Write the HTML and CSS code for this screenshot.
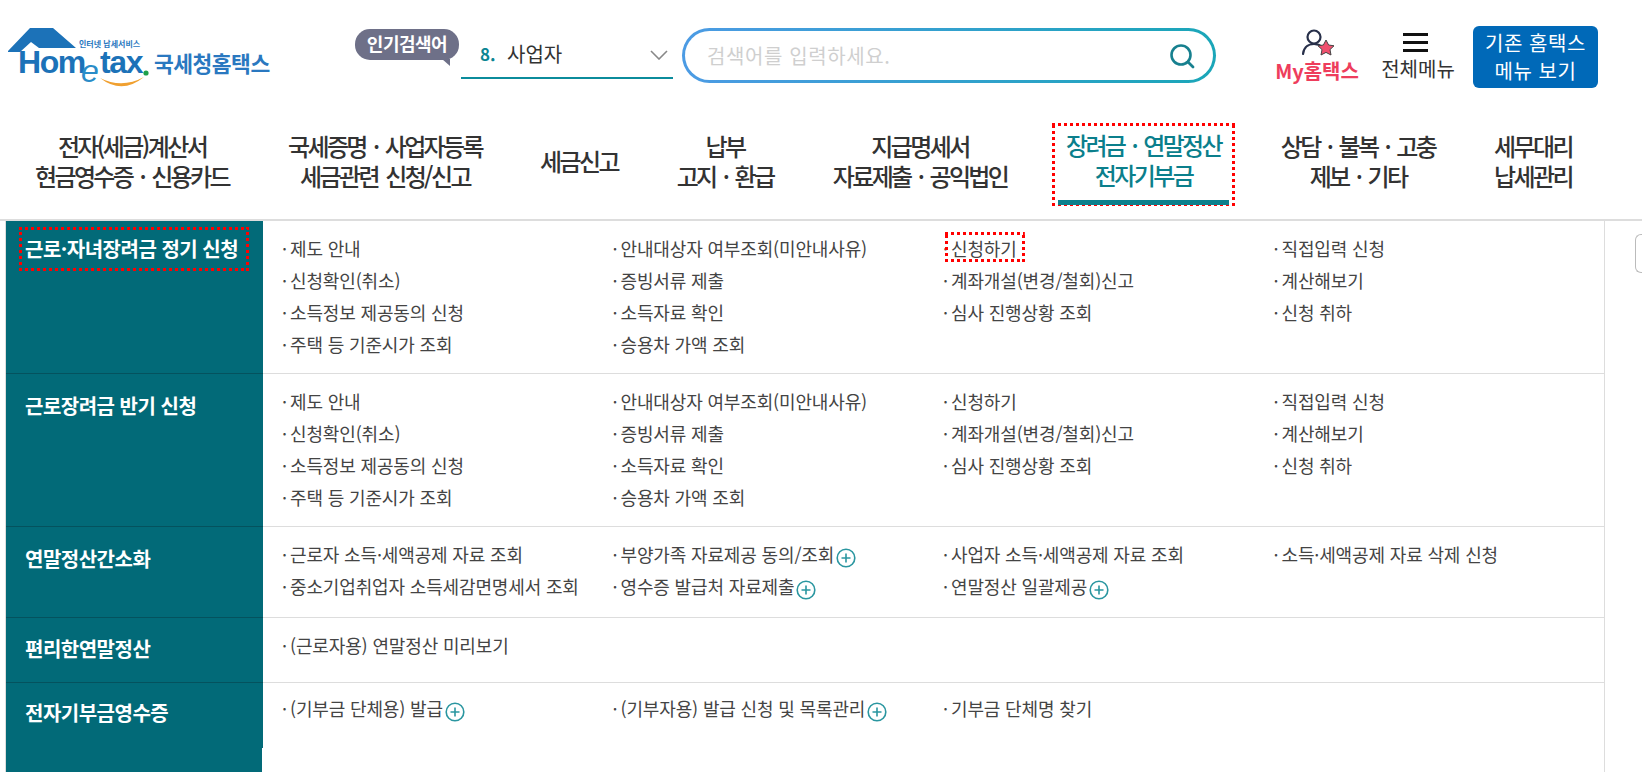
FILE: index.html
```html
<!DOCTYPE html>
<html lang="ko">
<head>
    <meta charset="UTF-8">
    <meta name="viewport" content="width=device-width, initial-scale=1.0">
    <title>Hometax</title>
    <link rel="stylesheet" href="styles.css">
</head>
<body>
    <header class="top-bar">
        <a class="logo" href="#">
            <svg width="280" height="70" viewBox="0 0 280 70">
                <path d="M8 26 L30 3 H53 L76 23 H39 L31 17 L20 27 H8 Z" fill="#1c72b8"/>
                <text class="logo-small" x="79" y="22">인터넷 납세서비스</text>
                <text class="logo-home" x="18" y="48">Hom</text>
                <text class="logo-e" x="81" y="57">e</text>
                <text class="logo-home" x="100" y="48">tax</text>
                <circle cx="146" cy="48" r="2.6" fill="#1fa04a"/>
                <path d="M100 53 Q122 70 144 52 Q122 64 100 53 Z" fill="#f0a030"/>
                <text class="logo-name" x="154" y="47">국세청홈택스</text>
            </svg>
        </a>
        <div class="popular">
            <span class="popular-badge">인기검색어</span>
        </div>
        <div class="keyword-select">
            <b>8.</b>
            <span>사업자</span>
            <svg class="chevron" width="18" height="10" viewBox="0 0 18 10"><path d="M1 1 L9 9 L17 1" fill="none" stroke="#888" stroke-width="1.6"/></svg>
        </div>
        <div class="search-box">
            <div class="search-inner">
                <span class="placeholder">검색어를 입력하세요.</span>
                <svg width="28" height="28" viewBox="0 0 28 28"><circle cx="13" cy="13" r="9.5" fill="none" stroke="#17808f" stroke-width="2.6"/><path d="M20 20 L25 25" stroke="#17808f" stroke-width="2.8" stroke-linecap="round"/></svg>
            </div>
        </div>
        <a class="my-tax" href="#">
            <svg width="34" height="28" viewBox="0 0 34 28">
                <circle cx="12" cy="8" r="6.5" fill="none" stroke="#28304a" stroke-width="2.2"/>
                <path d="M1 25 C2 17 8 15 12 15 C15 15 18 16 20 18" fill="none" stroke="#28304a" stroke-width="2.2" stroke-linecap="round"/>
                <path d="M24 11 L26.6 16 L32 16.8 L28 20.6 L29 26 L24 23.4 L19 26 L20 20.6 L16 16.8 L21.4 16 Z" fill="#f0506e" stroke="#444" stroke-width="1"/>
            </svg>
            <span>My홈택스</span>
        </a>
        <a class="all-menu" href="#">
            <span class="burger"><i></i><i></i><i></i></span>
            <span>전체메뉴</span>
        </a>
        <a class="old-menu" href="#">기존 홈택스<br>메뉴 보기</a>
    </header>

    <nav class="gnb">
        <a href="#">전자(세금)계산서<br>현금영수증 · 신용카드</a>
        <a href="#">국세증명 · 사업자등록<br>세금관련 신청/신고</a>
        <a href="#">세금신고</a>
        <a href="#">납부<br>고지 · 환급</a>
        <a href="#">지급명세서<br>자료제출 · 공익법인</a>
        <a href="#" class="active"><span class="active-inner red-dots">장려금 · 연말정산<br>전자기부금</span></a>
        <a href="#">상담 · 불복 · 고충<br>제보 · 기타</a>
        <a href="#">세무대리<br>납세관리</a>
    </nav>

    <main class="menu-table">
        <section class="menu-row row-1">
            <h2><span class="marked-title red-dots">근로·자녀장려금 정기 신청</span></h2>
            <ul>
                <li>제도 안내</li>
                <li>안내대상자 여부조회(미안내사유)</li>
                <li><span class="marked red-dots">신청하기</span></li>
                <li>직접입력 신청</li>
                <li>신청확인(취소)</li>
                <li>증빙서류 제출</li>
                <li>계좌개설(변경/철회)신고</li>
                <li>계산해보기</li>
                <li>소득정보 제공동의 신청</li>
                <li>소득자료 확인</li>
                <li>심사 진행상황 조회</li>
                <li>신청 취하</li>
                <li>주택 등 기준시가 조회</li>
                <li>승용차 가액 조회</li>
            </ul>
        </section>
        <section class="menu-row row-2">
            <h2>근로장려금 반기 신청</h2>
            <ul>
                <li>제도 안내</li>
                <li>안내대상자 여부조회(미안내사유)</li>
                <li>신청하기</li>
                <li>직접입력 신청</li>
                <li>신청확인(취소)</li>
                <li>증빙서류 제출</li>
                <li>계좌개설(변경/철회)신고</li>
                <li>계산해보기</li>
                <li>소득정보 제공동의 신청</li>
                <li>소득자료 확인</li>
                <li>심사 진행상황 조회</li>
                <li>신청 취하</li>
                <li>주택 등 기준시가 조회</li>
                <li>승용차 가액 조회</li>
            </ul>
        </section>
        <section class="menu-row row-3">
            <h2>연말정산간소화</h2>
            <ul>
                <li>근로자 소득·세액공제 자료 조회</li>
                <li>부양가족 자료제공 동의/조회<svg class="plus" viewBox="0 0 20 20"><circle cx="10" cy="10" r="8.8"/><path d="M10 5.5 V14.5 M5.5 10 H14.5"/></svg></li>
                <li>사업자 소득·세액공제 자료 조회</li>
                <li>소득·세액공제 자료 삭제 신청</li>
                <li>중소기업취업자 소득세감면명세서 조회</li>
                <li>영수증 발급처 자료제출<svg class="plus" viewBox="0 0 20 20"><circle cx="10" cy="10" r="8.8"/><path d="M10 5.5 V14.5 M5.5 10 H14.5"/></svg></li>
                <li>연말정산 일괄제공<svg class="plus" viewBox="0 0 20 20"><circle cx="10" cy="10" r="8.8"/><path d="M10 5.5 V14.5 M5.5 10 H14.5"/></svg></li>
            </ul>
        </section>
        <section class="menu-row row-4">
            <h2>편리한연말정산</h2>
            <ul>
                <li>(근로자용) 연말정산 미리보기</li>
            </ul>
        </section>
        <section class="menu-row row-5">
            <h2>전자기부금영수증</h2>
            <ul>
                <li>(기부금 단체용) 발급<svg class="plus" viewBox="0 0 20 20"><circle cx="10" cy="10" r="8.8"/><path d="M10 5.5 V14.5 M5.5 10 H14.5"/></svg></li>
                <li>(기부자용) 발급 신청 및 목록관리<svg class="plus" viewBox="0 0 20 20"><circle cx="10" cy="10" r="8.8"/><path d="M10 5.5 V14.5 M5.5 10 H14.5"/></svg></li>
                <li>기부금 단체명 찾기</li>
            </ul>
        </section>
        <div class="side-fill"></div>
        <span class="side-tab"></span>
    </main>
</body>
</html>
```

FILE: styles.css
```css
* {
    box-sizing: border-box;
}

html, body {
    height: 772px;
    overflow: hidden;
}

body {
    margin: 0;
    font-family: "Noto Sans CJK KR", "Noto Sans", sans-serif;
    color: #333;
    background-color: #fff;
}

a {
    color: inherit;
    text-decoration: none;
}

/* square red dots around the highlighted items */
.red-dots {
    background:
        repeating-linear-gradient(90deg, #f00 0 3px, transparent 3px 6px) top / 100% 3px no-repeat,
        repeating-linear-gradient(90deg, #f00 0 3px, transparent 3px 6px) bottom / 100% 3px no-repeat,
        repeating-linear-gradient(0deg, #f00 0 3px, transparent 3px 6px) left / 3px 100% no-repeat,
        repeating-linear-gradient(0deg, #f00 0 3px, transparent 3px 6px) right / 3px 100% no-repeat;
}

/* top bar */
.top-bar {
    display: flex;
    align-items: flex-start;
    height: 118px;
}

.logo {
    width: 355px;
    height: 70px;
    margin-top: 25px;
}

.logo svg {
    display: block;
}

.logo-small {
    font-size: 8px;
    font-weight: 700;
    fill: #2a78c0;
}

.logo-home {
    font-family: "Liberation Sans", sans-serif;
    font-size: 32px;
    font-weight: 700;
    letter-spacing: -1.4px;
    fill: #1c72b8;
}

.logo-e {
    font-family: "Liberation Sans", sans-serif;
    font-size: 32px;
    font-style: italic;
    fill: #2a8cc8;
}

.logo-name {
    font-size: 21.5px;
    font-weight: 700;
    letter-spacing: -0.5px;
    fill: #2a78c0;
}

.popular {
    width: 106px;
    margin-top: 29px;
}

.popular-badge {
    position: relative;
    display: block;
    width: 104px;
    height: 31px;
    line-height: 28px;
    text-align: center;
    font-size: 18px;
    font-weight: 700;
    letter-spacing: -0.5px;
    color: #fff;
    background-color: #6e7088;
    border-radius: 15px;
}

.popular-badge::after {
    content: "";
    position: absolute;
    right: 9px;
    bottom: -6px;
    border-top: 7px solid #6e7088;
    border-left: 8px solid transparent;
}

.keyword-select {
    display: flex;
    align-items: center;
    width: 212px;
    height: 50px;
    margin-top: 29px;
    padding-left: 19px;
    border-bottom: 2px solid #0b8c9c;
    font-size: 20px;
}

.keyword-select b {
    width: 27px;
    color: #0b8593;
    font-size: 17px;
}

.keyword-select span {
    flex: 1;
    color: #333;
}

.keyword-select .chevron {
    margin-right: 5px;
    margin-top: 4px;
}

.search-box {
    width: 534px;
    height: 55px;
    margin: 28px 0 0 9px;
    padding: 3px;
    border-radius: 28px;
    background: linear-gradient(90deg, #4c9be4, #1aa6b8);
}

.search-inner {
    display: flex;
    align-items: center;
    justify-content: space-between;
    height: 49px;
    padding: 0 17px 0 22px;
    border-radius: 25px;
    background-color: #fff;
}

.placeholder {
    font-size: 20px;
    letter-spacing: 0.6px;
    color: #cfcfcf;
}

.my-tax {
    display: flex;
    flex-direction: column;
    align-items: center;
    width: 84px;
    margin: 29px 0 0 59px;
    color: #ee3d5c;
    font-size: 20px;
    font-weight: 700;
    line-height: 28px;
    white-space: nowrap;
}

.my-tax svg {
    display: block;
    margin-left: 4px;
}

.all-menu {
    display: flex;
    flex-direction: column;
    align-items: center;
    width: 76px;
    margin: 33px 0 0 21px;
    font-size: 20px;
    line-height: 28px;
    white-space: nowrap;
}

.burger {
    display: flex;
    flex-direction: column;
    gap: 5px;
    width: 25px;
    height: 22px;
    margin-right: 5px;
}

.burger i {
    display: block;
    height: 3px;
    background-color: #111;
}

.old-menu {
    width: 125px;
    height: 62px;
    margin: 26px 0 0 17px;
    padding-top: 3px;
    text-align: center;
    font-size: 20px;
    line-height: 28px;
    letter-spacing: 0.6px;
    color: #fff;
    background-color: #0069b8;
    border-radius: 6px;
}

/* main navigation */
.gnb {
    display: grid;
    grid-template-columns: 264px 242px 146px 146px 244px 200px 232px 118px;
    height: 103px;
    padding-bottom: 8px;
    align-items: center;
    border-bottom: 2px solid #ddd;
}

.gnb a {
    display: block;
    margin-bottom: 7px;
    text-align: center;
    font-size: 24px;
    font-weight: 500;
    line-height: 30px;
    letter-spacing: -2.6px;
    word-spacing: 3px;
    color: #333;
}

.gnb .active {
    margin-bottom: 0;
    color: #0b7f8c;
}

.active-inner {
    display: block;
    width: 183px;
    height: 83px;
    margin: 0 auto 0 10px;
    padding: 7px 3px 0;
}

.active-inner::after {
    content: "";
    display: block;
    height: 5px;
    margin: 10px 3px 0;
    background-color: #0b7f8c;
}

/* menu table */
.menu-table {
    position: relative;
    width: 1600px;
    margin-left: 5px;
    border-left: 1px solid #ddd;
    border-right: 1px solid #ddd;
}

.menu-row {
    display: grid;
    grid-template-columns: 257px 1fr;
    border-bottom: 1px solid #ddd;
}

.row-1 { height: 153px; }
.row-2 { height: 153px; }
.row-3 { height: 91px; }
.row-4 { height: 65px; }
.row-5 { height: 64px; border-bottom: 0; }

.menu-row h2 {
    margin: 0 0 -1px;
    padding: 16px 0 0 19px;
    font-size: 20px;
    font-weight: 700;
    line-height: 32px;
    letter-spacing: -0.5px;
    color: #fff;
    background-color: #026a78;
    border-bottom: 1px solid #04525e;
}

.row-1 h2 {
    padding: 6px 0 0 13px;
}

.row-4 h2 {
    padding-top: 15px;
}

.row-5 h2 {
    padding-top: 14px;
    border-bottom: 0;
}

.marked-title {
    display: inline-block;
    width: 230px;
    height: 44px;
    padding: 6px 0 0 6px;
    white-space: nowrap;
}

.menu-row ul {
    display: grid;
    grid-template-columns: repeat(4, 330.5px);
    grid-auto-rows: 32px;
    align-content: start;
    margin: 0;
    padding: 11px 0 0 19px;
    list-style: none;
    font-size: 18px;
    line-height: 32px;
    letter-spacing: -0.15px;
    color: #444;
}

.row-5 ul {
    padding-top: 9px;
}

.menu-row li {
    white-space: nowrap;
}

.menu-row li::before {
    content: "·";
    display: inline-block;
    width: 8px;
}

.marked {
    display: inline-block;
    height: 30px;
    margin-left: -6px;
    padding: 0 8px 0 6px;
    line-height: 32px;
}

.plus {
    width: 20px;
    height: 20px;
    margin-left: 2px;
    vertical-align: -6px;
    fill: none;
    stroke: #2a96a0;
    stroke-width: 1.6;
}

.side-fill {
    width: 256px;
    height: 26px;
    background-color: #026a78;
}

.side-tab {
    position: absolute;
    top: 13px;
    right: -43px;
    width: 12px;
    height: 39px;
    border: 1px solid #bbb;
    border-right: 0;
    border-radius: 6px 0 0 6px;
}
```
